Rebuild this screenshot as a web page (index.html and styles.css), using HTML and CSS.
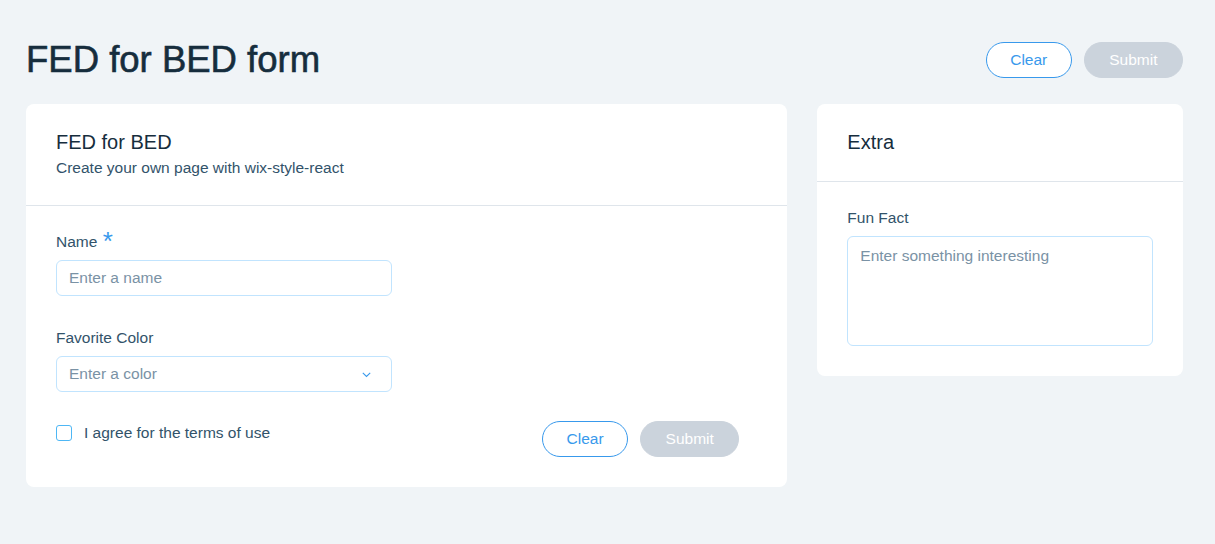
FILE: index.html
```html
<!DOCTYPE html>
<html lang="en">
<head>
<meta charset="utf-8">
<title>FED for BED form</title>
<link rel="stylesheet" href="styles.css">
</head>
<body>
<div class="page">
  <header class="page-header">
    <h1 class="page-title">FED for BED form</h1>
    <div class="actions">
      <button class="btn btn-outline" type="button">Clear</button>
      <button class="btn btn-disabled" type="button" disabled>Submit</button>
    </div>
  </header>

  <main class="layout">
    <section class="card card-main">
      <div class="card-header">
        <div class="card-title">FED for BED</div>
        <div class="card-subtitle">Create your own page with wix-style-react</div>
      </div>
      <div class="card-content">
        <div class="form-grid">
          <div class="field">
            <label class="field-label">Name <span class="required">*</span></label>
            <input class="input" type="text" placeholder="Enter a name">
          </div>
          <div></div>
          <div class="field">
            <label class="field-label">Favorite Color</label>
            <div class="input dropdown">
              <input class="dropdown-input" type="text" placeholder="Enter a color">
              <svg class="chevron" width="9" height="6" viewBox="0 0 9 6"><path d="M0.8 0.8 L4.5 4.5 L8.2 0.8" fill="none" stroke="#3899ec" stroke-width="1.1"/></svg>
            </div>
          </div>
          <div></div>
          <label class="checkbox-row">
            <span class="checkbox"></span>
            <span class="checkbox-text">I agree for the terms of use</span>
          </label>
          <div class="form-actions">
            <button class="btn btn-outline" type="button">Clear</button>
            <button class="btn btn-disabled" type="button" disabled>Submit</button>
          </div>
        </div>
      </div>
    </section>

    <section class="card card-side">
      <div class="card-header">
        <div class="card-title">Extra</div>
      </div>
      <div class="card-content">
        <div class="field">
          <label class="field-label">Fun Fact</label>
          <textarea class="textarea" placeholder="Enter something interesting"></textarea>
        </div>
      </div>
    </section>
  </main>
</div>
</body>
</html>
```

FILE: styles.css
```css
* {
  box-sizing: border-box;
}

body {
  margin: 0;
  background: #f0f4f7;
  font-family: "Liberation Sans", Arial, sans-serif;
  color: #32536a;
}

.page {
  padding: 39px 32px 0 26px;
}

.page-header {
  display: flex;
  align-items: center;
  justify-content: space-between;
  height: 42px;
  margin-bottom: 23px;
}

.page-title {
  margin: 0;
  font-size: 36.5px;
  line-height: 42px;
  font-weight: normal;
  color: #162d3d;
  -webkit-text-stroke: 0.6px #162d3d;
}

.actions {
  display: flex;
  gap: 12px;
}

.btn {
  height: 36px;
  border-radius: 18px;
  font-family: "Liberation Sans", Arial, sans-serif;
  font-size: 15.5px;
  line-height: 34px;
  padding: 0 23.5px;
  cursor: pointer;
}

.btn-outline {
  background: #ffffff;
  border: 1px solid #3899ec;
  color: #3899ec;
}

.btn-disabled {
  background: #cbd3dc;
  border: 1px solid #cbd3dc;
  color: #ffffff;
  padding: 0 24.5px;
}

.layout {
  display: grid;
  grid-template-columns: repeat(12, 1fr);
  column-gap: 30px;
  align-items: start;
}

.card {
  background: #ffffff;
  border-radius: 8px;
}

.card-main {
  grid-column: span 8;
}

.card-side {
  grid-column: span 4;
}

.card-header {
  padding: 24px 30px 25px;
  border-bottom: 1px solid #dfe5eb;
}

.card-title {
  font-size: 20px;
  line-height: 28px;
  color: #162d3d;
}

.card-subtitle {
  font-size: 15.5px;
  line-height: 24px;
  color: #32536a;
}

.card-content {
  padding: 24px 30px 30px;
}

.form-grid {
  display: grid;
  grid-template-columns: 1fr 1fr;
  column-gap: 30px;
  row-gap: 30px;
}

.field {
  display: flex;
  flex-direction: column;
}

.field-label {
  font-size: 15.5px;
  line-height: 24px;
  margin-bottom: 6px;
  color: #32536a;
}

.required {
  color: #3899ec;
  font-size: 26px;
  line-height: 10px;
  margin-left: 1px;
  vertical-align: -3px;
}

.input {
  height: 36px;
  border: 1px solid #c1e4fe;
  border-radius: 6px;
  padding: 0 12px;
  font-family: "Liberation Sans", Arial, sans-serif;
  font-size: 15.5px;
  color: #162d3d;
  background: #ffffff;
  outline: none;
}

.input::placeholder,
.dropdown-input::placeholder,
.textarea::placeholder {
  color: #7a92a5;
  opacity: 1;
}

.dropdown {
  display: flex;
  align-items: center;
  padding: 0 20px 0 12px;
}

.dropdown-input {
  flex: 1;
  min-width: 0;
  border: none;
  outline: none;
  padding: 0;
  font-family: "Liberation Sans", Arial, sans-serif;
  font-size: 15.5px;
  color: #162d3d;
  background: transparent;
}

.chevron {
  flex: none;
  display: block;
  margin-top: 1px;
}

.checkbox-row {
  display: flex;
  align-items: center;
  gap: 12px;
  height: 24px;
  margin-top: -1px;
}

.checkbox {
  width: 16px;
  height: 16px;
  border: 1px solid #4eb7f5;
  border-radius: 3px;
  background: #ffffff;
  flex: none;
}

.checkbox-text {
  font-size: 15.5px;
  line-height: 24px;
  color: #32536a;
}

.form-actions {
  display: flex;
  justify-content: flex-end;
  gap: 12px;
  padding-right: 18px;
  margin-top: -1px;
}

.textarea {
  height: 110px;
  border: 1px solid #c1e4fe;
  border-radius: 6px;
  padding: 7px 12px;
  font-family: "Liberation Sans", Arial, sans-serif;
  font-size: 15.5px;
  line-height: 24px;
  color: #162d3d;
  resize: none;
  outline: none;
}
```
